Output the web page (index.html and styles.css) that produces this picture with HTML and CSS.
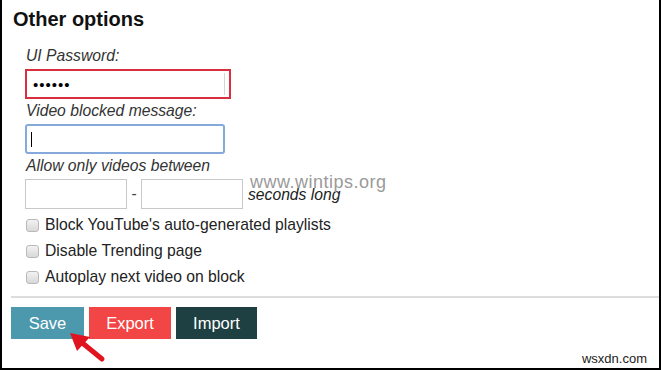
FILE: index.html
```html
<!DOCTYPE html>
<html lang="en">
<head>
    <meta charset="UTF-8">
    <title>Other options</title>
    <link rel="stylesheet" href="styles.css">
</head>
<body>

    <div class="frame">
        <h2 class="title">Other options</h2>

        <!-- Options Form -->
        <form class="options">
            <div class="field">
                <label for="uipass">UI Password:</label>
                <input type="password" id="uipass" class="text-input pass-input" value="secret">
            </div>
            <div class="field">
                <label for="blockmsg">Video blocked message:</label>
                <span class="caret-wrap">
                    <input type="text" id="blockmsg" class="text-input focus-input">
                    <span class="caret"></span>
                </span>
            </div>
            <div class="field">
                <label>Allow only videos between</label>
                <div class="range-row">
                    <input type="text" class="text-input small-input">
                    <span class="dash">-</span>
                    <input type="text" class="text-input small-input">
                    <span class="unit">seconds long</span>
                </div>
            </div>

            <div class="checks">
                <label class="check"><span class="box"></span>Block YouTube's auto-generated playlists</label>
                <label class="check"><span class="box"></span>Disable Trending page</label>
                <label class="check"><span class="box"></span>Autoplay next video on block</label>
            </div>
        </form>

        <hr class="divider">

        <div class="buttons">
            <button type="button" class="btn save">Save</button>
            <button type="button" class="btn export">Export</button>
            <button type="button" class="btn import">Import</button>
        </div>

        <!-- red pointer arrow -->
        <svg class="arrow" width="44" height="34" viewBox="0 0 44 34">
            <line x1="36" y1="29" x2="14" y2="11" stroke="#e0141e" stroke-width="5" stroke-linecap="round"/>
            <polygon points="4,3 24,7 11,21" fill="#e0141e"/>
        </svg>

        <div class="watermark">www.wintips.org</div>
        <div class="stamp">wsxdn.com</div>
    </div>

</body>
</html>
```

FILE: styles.css
```css
/* General Styling */
body {
    margin: 0;
    font-family: "Liberation Sans", Arial, sans-serif;
    color: #222;
    background: #ffffff;
}

.frame {
    position: relative;
    box-sizing: border-box;
    width: 661px;
    height: 370px;
    border-left: 2px solid #000;
    border-right: 2px solid #000;
    border-bottom: 2px solid #000;
    padding: 8px 0 0 9px;
    overflow: hidden;
}

.title {
    margin: 0 0 0 2px;
    font-size: 20px;
    font-weight: bold;
    color: #111;
    line-height: 22px;
}

/* Form */
.options {
    padding: 17px 0 0 15px;
}

.field {
    margin-bottom: 3px;
}

.field label {
    display: block;
    font-style: italic;
    font-size: 15.7px;
    line-height: 18px;
    margin-bottom: 4px;
    color: #333;
}

.text-input {
    box-sizing: border-box;
    height: 30px;
    border: 1px solid #c8c8c8;
    padding: 0 6px;
    font-size: 15px;
    font-family: inherit;
    background: #fff;
    outline: none;
}

.pass-input {
    width: 206px;
    margin-left: -1px;
    border: 2px solid #d9303f;
    letter-spacing: 1px;
    background: linear-gradient(#d4d4d4, #d4d4d4) no-repeat 197px 2px / 1px 22px;
}

.caret-wrap {
    position: relative;
    display: inline-block;
    margin-left: -1px;
}

.focus-input {
    width: 200px;
    border: 2px solid #86a9dc;
    border-radius: 3px;
}

.caret {
    position: absolute;
    left: 6px;
    top: 8px;
    width: 1px;
    height: 15px;
    background: #000;
}

.range-row {
    display: flex;
    align-items: center;
    margin-left: -1px;
}

.small-input {
    width: 102px;
    height: 30px;
}

.dash {
    width: 14px;
    text-align: center;
    font-size: 15.7px;
    color: #444;
}

.unit {
    font-style: italic;
    font-size: 15.7px;
    margin-left: 5px;
    margin-top: 2px;
    color: #222;
}

/* Checkboxes */
.checks {
    margin-top: 0;
}

.check {
    display: flex;
    align-items: center;
    font-size: 15.7px;
    height: 26px;
}

.box {
    box-sizing: border-box;
    width: 13px;
    height: 13px;
    border: 1px solid #b9b9b9;
    border-radius: 3px;
    background: linear-gradient(#f2f2f2, #d8d8d8);
    margin: 0 6px 0 0;
}

.divider {
    border: none;
    border-top: 2px solid #ddd;
    margin: 6px 0 0 0;
}

/* Buttons */
.buttons {
    display: flex;
    gap: 5px;
    padding: 9px 0 0 0;
}

.btn {
    border: none;
    height: 32px;
    color: #fff;
    font-size: 16.5px;
    font-family: inherit;
    padding: 0;
}

.save {
    width: 73px;
    background: #4c98ac;
}

.export {
    width: 82px;
    background: #f24545;
}

.import {
    width: 81px;
    background: #1e4043;
}

.arrow {
    position: absolute;
    left: 64px;
    top: 330px;
}

.watermark {
    position: absolute;
    left: 248px;
    top: 172px;
    font-size: 18px;
    letter-spacing: 0.5px;
    color: #9a9a9a;
}

.stamp {
    position: absolute;
    right: 12px;
    bottom: 2px;
    font-size: 13px;
    color: #222;
}
```
